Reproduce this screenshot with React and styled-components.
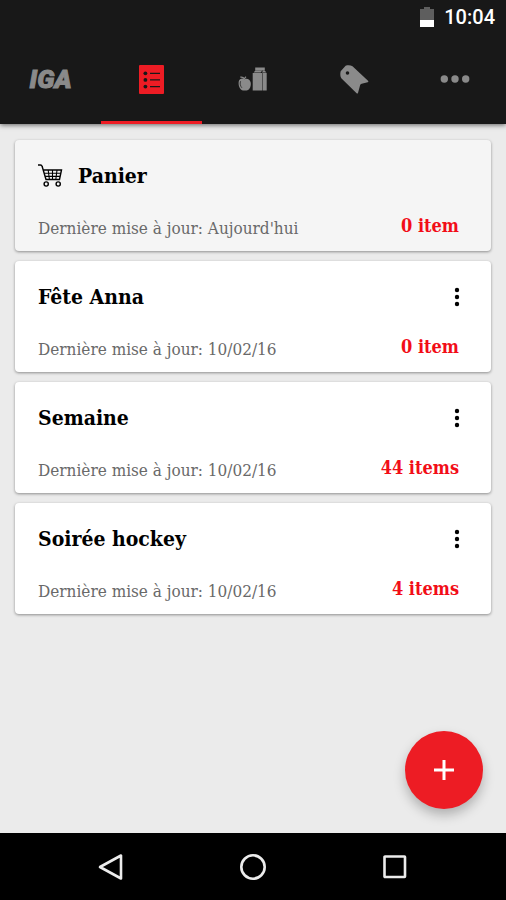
import styled, { createGlobalStyle, ThemeProvider } from 'styled-components';

const theme = {
  colors: {
    red: '#ed1c24',
    count: '#f20d17',
    bar: '#181818',
    page: '#ebebeb',
    icon: '#8a8a8a',
    muted: '#696969',
  },
  fonts: {
    sans: 'Roboto, sans-serif',
    slab: '"Roboto Slab", "DejaVu Serif Condensed", "DejaVu Serif", serif',
  },
};

const GlobalStyle = createGlobalStyle`
  *, *::before, *::after {
    box-sizing: border-box;
  }

  body {
    margin: 0;
    background: #ebebeb;
  }

  h2, p, ul {
    margin: 0;
    padding: 0;
  }

  button {
    border: 0;
    padding: 0;
    background: none;
    color: inherit;
    cursor: pointer;
  }

  svg {
    display: block;
  }
`;

const Screen = styled.div`
  min-height: 100vh;
  display: flex;
  flex-direction: column;
  background: ${({ theme }) => theme.colors.page};
  font-family: ${({ theme }) => theme.fonts.slab};
`;

const Header = styled.header`
  background: ${({ theme }) => theme.colors.bar};
  box-shadow: 0 1px 5px rgba(0, 0, 0, 0.6);
`;

const StatusBar = styled.div`
  height: 34px;
  padding: 0 11px;
  display: flex;
  align-items: center;
  justify-content: flex-end;
  gap: 10px;
  color: #fff;
  font: 500 20px/34px ${({ theme }) => theme.fonts.sans};
`;

const Tabs = styled.nav`
  display: grid;
  grid-template-columns: repeat(5, 1fr);
`;

const Tab = styled.a`
  height: 90px;
  display: flex;
  align-items: center;
  justify-content: center;
  box-shadow: ${({ theme, $active }) =>
    $active ? `inset 0 -3px ${theme.colors.red}` : 'none'};
  color: ${({ theme, $active }) =>
    $active ? theme.colors.red : theme.colors.icon};
  text-decoration: none;
`;

const Logo = styled.span`
  font: italic 900 26px/30px ${({ theme }) => theme.fonts.sans};
  -webkit-text-stroke: 1px currentColor;
`;

const Main = styled.main`
  position: relative;
  flex: 1;
  padding: 16px 15px;
`;

const Lists = styled.ul`
  display: grid;
  gap: 10px;
  list-style: none;
`;

const Card = styled.li`
  height: 111px;
  padding: 20px 32px 9px 23px;
  display: flex;
  flex-direction: column;
  justify-content: space-between;
  border-radius: 4px;
  background: ${({ $basket }) => ($basket ? '#f5f5f5' : '#fff')};
  box-shadow: 0 1px 3px rgba(0, 0, 0, 0.4);
`;

const Row = styled.div`
  display: flex;
  align-items: flex-start;
  justify-content: space-between;
`;

const Title = styled.h2`
  display: flex;
  align-items: center;
  gap: 15px;
  color: #000;
  font-size: 21px;
  font-weight: 700;
  line-height: 32px;
`;

const MenuButton = styled.button`
  width: 24px;
  height: 32px;
  margin-right: -10px;
  display: grid;
  place-items: center;
`;

const Updated = styled.p`
  color: ${({ theme }) => theme.colors.muted};
  font-size: 17px;
  line-height: 28px;
`;

const Count = styled.p`
  color: ${({ theme }) => theme.colors.count};
  font-size: 18px;
  font-weight: 700;
  line-height: 24px;
`;

const AddButton = styled.button`
  position: absolute;
  right: 23px;
  bottom: 24px;
  width: 78px;
  height: 78px;
  display: grid;
  place-items: center;
  border-radius: 50%;
  background: ${({ theme }) => theme.colors.red};
  box-shadow: 0 6px 12px rgba(0, 0, 0, 0.25);
`;

const SystemBar = styled.footer`
  height: 67px;
  padding: 0 8%;
  display: grid;
  grid-template-columns: repeat(3, 1fr);
  background: #000;
`;

const SystemButton = styled.button`
  display: grid;
  place-items: center;
`;

const BatteryIcon = () => (
  <svg width="14" height="20" viewBox="0 0 14 20" aria-hidden="true">
    <path d="M0 2h4V0h6v2h4v11H0z" fill="#5e5e5e" />
    <path d="M0 13h14v7H0z" fill="#fff" />
  </svg>
);

const ListIcon = () => (
  <svg width="25" height="29" viewBox="0 0 25 29" aria-hidden="true">
    <rect width="25" height="29" rx="1" fill="currentColor" />
    <g fill="#181818">
      <circle cx="6.4" cy="8.3" r="1.9" />
      <circle cx="6.4" cy="14.9" r="1.9" />
      <circle cx="6.4" cy="21.6" r="1.9" />
      <path d="M11 7.7h10v1.3H11zM11 14.3h10v1.3H11zM11 21h10v1.3H11z" />
    </g>
  </svg>
);

const GroceriesIcon = () => (
  <svg width="29" height="24" viewBox="0 0 29 24" aria-hidden="true">
    <path
      d="M6.6 12.2C4.6 10.8 1.5 11.3.8 14.3c-.9 4 1.2 9 4.2 9.2h3.6c3-.3 4.7-4.5 4.1-8-.5-3-3.6-4.4-6.100-3.300z"
      fill="currentColor"
    />
    <path
      d="M2.3 10.2c1.8-.4 3.3.3 4.200 2M6.600 11.700c.2-1 .7-1.600 1.500-2"
      fill="none"
      stroke="currentColor"
      strokeWidth="1.2"
    />
    <path d="M2.6 14.2c-.9 2.400-.2 5 1.300 6.600" fill="none" stroke="#181818" strokeWidth=".7" />
    <path
      d="M17.2.5h9.600v2.900h-9.600zM17 3.800h7l-1.300 1.800h-7zM25 3.800h1.800L28.500 5.600h-4.600zM14.700 6h9.400v17.500h-9.400zM24.600 6h4.100v17.500h-4.100z"
      fill="currentColor"
    />
  </svg>
);

const TagIcon = () => (
  <svg width="29" height="29" viewBox="0 0 29 29" aria-hidden="true">
    <path
      fillRule="evenodd"
      d="M5.600.8C7.700.1 10.500.1 12.500 1.200L28 15.800c.6.600.5 1.200-.3 1.400l-6 1.500c-.9.300-1.300.8-1.600 1.600L18 27.900c-.3.800-.8.900-1.400.3L1.300 13.200C.2 11.900 0 8.500.7 6.300zM7.500 6.200a1.800 1.800 0 1 0 0 3.600 1.800 1.800 0 0 0 0-3.600z"
      fill="currentColor"
    />
  </svg>
);

const MoreIcon = () => (
  <svg width="30" height="8" viewBox="0 0 30 8" fill="currentColor" aria-hidden="true">
    <circle cx="4.3" cy="4" r="3.7" />
    <circle cx="15" cy="4" r="3.7" />
    <circle cx="25.7" cy="4" r="3.7" />
  </svg>
);

const CartIcon = () => (
  <svg
    width="25"
    height="24"
    viewBox="0 0 25 24"
    fill="none"
    stroke="#000"
    strokeWidth="1.4"
    aria-hidden="true"
  >
    <path d="M0 1h2.400c1 0 1.500.4 1.700 1.300L8 15.500h13.500L23.500 6H5.200" />
    <path
      d="M6.200 9.200h16.500M7.100 12.400h14.900M10.200 6l1.200 9.500M14.500 6v9.500M19 6l-1.200 9.500"
      strokeWidth="1.100"
    />
    <circle cx="8.200" cy="20" r="2.100" />
    <circle cx="20.200" cy="20" r="2.100" />
  </svg>
);

const KebabIcon = () => (
  <svg width="6" height="20" viewBox="0 0 6 20" aria-hidden="true">
    <circle cx="3" cy="3" r="2.2" />
    <circle cx="3" cy="10" r="2.2" />
    <circle cx="3" cy="17" r="2.2" />
  </svg>
);

const PlusIcon = () => (
  <svg width="20" height="20" viewBox="0 0 20 20" aria-hidden="true">
    <path d="M10 0v20M0 10h20" stroke="#fff" strokeWidth="3" />
  </svg>
);

const systemIcons = [
  { label: 'Retour', shape: <path d="M24 2.500v23L3 14z" /> },
  { label: 'Accueil', shape: <circle cx="14" cy="14" r="11.700" /> },
  {
    label: 'Applications récentes',
    shape: <rect x="3.500" y="3.500" width="20.500" height="20.500" rx=".5" />,
  },
];

const tabs = [
  { label: 'IGA', icon: <Logo>IGA</Logo> },
  { label: 'Listes', icon: <ListIcon />, active: true },
  { label: 'Produits', icon: <GroceriesIcon /> },
  { label: 'Rabais', icon: <TagIcon /> },
  { label: 'Plus', icon: <MoreIcon /> },
];

const lists = [
  { name: 'Panier', updated: "Aujourd'hui", count: '0 item', basket: true },
  { name: 'Fête Anna', updated: '10/02/16', count: '0 item' },
  { name: 'Semaine', updated: '10/02/16', count: '44 items' },
  { name: 'Soirée hockey', updated: '10/02/16', count: '4 items' },
];

const ListCard = ({ name, updated, count, basket }) => (
  <Card $basket={basket}>
    <Row>
      <Title>
        {basket && <CartIcon />}
        {name}
      </Title>
      {!basket && (
        <MenuButton aria-label={`Options ${name}`}>
          <KebabIcon />
        </MenuButton>
      )}
    </Row>
    <Row>
      <Updated>Dernière mise à jour: {updated}</Updated>
      <Count>{count}</Count>
    </Row>
  </Card>
);

const App = () => (
  <ThemeProvider theme={theme}>
    <GlobalStyle />
    <Screen>
      <Header>
        <StatusBar>
          <BatteryIcon />
          <time>10:04</time>
        </StatusBar>
        <Tabs>
          {tabs.map(({ label, icon, active }) => (
            <Tab key={label} href="#" aria-label={label} $active={active}>
              {icon}
            </Tab>
          ))}
        </Tabs>
      </Header>
      <Main>
        <Lists>
          {lists.map((list) => (
            <ListCard key={list.name} {...list} />
          ))}
        </Lists>
        <AddButton aria-label="Ajouter une liste">
          <PlusIcon />
        </AddButton>
      </Main>
      <SystemBar>
        {systemIcons.map(({ label, shape }) => (
          <SystemButton key={label} aria-label={label}>
            <svg
              width="28"
              height="28"
              viewBox="0 0 28 28"
              fill="none"
              stroke="#ececec"
              strokeWidth="2.6"
              strokeLinejoin="round"
              aria-hidden="true"
            >
              {shape}
            </svg>
          </SystemButton>
        ))}
      </SystemBar>
    </Screen>
  </ThemeProvider>
);

export default App;
